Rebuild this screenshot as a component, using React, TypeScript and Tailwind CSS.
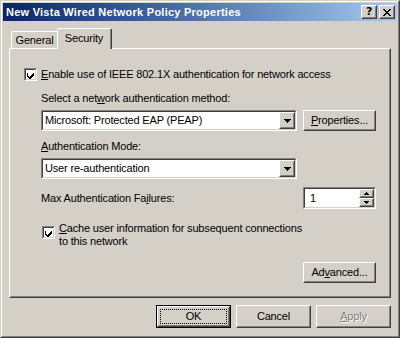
import React from "react";

const Raised = ({ children, className = "", inner = "" }: { children?: React.ReactNode; className?: string; inner?: string }) => (
  <div className={`border border-t-white border-l-white border-r-[#404040] border-b-[#404040] bg-[#d4d0c8] ${className}`}>
    <div className={`h-full w-full border border-t-[#d4d0c8] border-l-[#d4d0c8] border-r-[#808080] border-b-[#808080] flex items-center justify-center ${inner}`}>
      {children}
    </div>
  </div>
);

const Sunken = ({ children, className = "" }: { children?: React.ReactNode; className?: string }) => (
  <div className={`border border-t-[#808080] border-l-[#808080] border-r-white border-b-white ${className}`}>
    <div className="h-full w-full border border-t-[#404040] border-l-[#404040] border-r-[#d4d0c8] border-b-[#d4d0c8] bg-white flex items-center">
      {children}
    </div>
  </div>
);

const Check = () => (
  <Sunken className="w-[13px] h-[13px] shrink-0">
    <svg width="9" height="9" viewBox="0 0 9 9" shapeRendering="crispEdges">
      <path d="M1 3h1v3h1v1h1v-1h1v-1h1v-1h1v-1h1v3h-1v1h-1v1h-1v1h-2v-1h-1v-1h-1z" fill="#000" />
    </svg>
  </Sunken>
);

const Arrow = ({ up = false, w = 7 }: { up?: boolean; w?: number }) => {
  const h = Math.ceil(w / 2);
  return (
    <svg width={w} height={h} viewBox={`0 0 ${w} ${h}`} shapeRendering="crispEdges">
      <polygon points={up ? `${w / 2},0 ${w},${h} 0,${h}` : `0,0 ${w},0 ${w / 2},${h}`} fill="#000" />
    </svg>
  );
};

const Combo = ({ text }: { text: string }) => (
  <Sunken className="w-[256px] h-[21px]">
    <div className="flex-1 pl-[2px] leading-[13px] text-black">{text}</div>
    <Raised className="w-[16px] h-[17px]">
      <Arrow />
    </Raised>
  </Sunken>
);

const U = ({ children }: { children: React.ReactNode }) => (
  <span className="underline underline-offset-[1px] decoration-1">{children}</span>
);

export default function App() {
  return (
    <div className="w-[400px] h-[338px] bg-[#d4d0c8] border border-t-[#d4d0c8] border-l-[#d4d0c8] border-r-[#404040] border-b-[#404040] font-['Liberation_Sans',Arial,sans-serif] text-[11px] tracking-[-0.17px] text-black select-none">
      <div className="h-full border border-t-white border-l-white border-r-[#808080] border-b-[#808080] p-px flex flex-col">
        {/* Title bar */}
        <div className="h-[18px] bg-gradient-to-r from-[#0a246a] to-[#a6caf0] flex items-center pl-[3px] pr-[2px]">
          <div className="flex-1 text-white font-bold text-[11px] tracking-[0.25px] leading-[13px] whitespace-nowrap">
            New Vista Wired Network Policy Properties
          </div>
          <Raised className="w-[16px] h-[14px]">
            <span className="font-bold text-[11px] leading-[10px] font-['DejaVu_Sans',sans-serif]">?</span>
          </Raised>
          <Raised className="w-[16px] h-[14px] ml-[2px]">
            <svg width="8" height="7" viewBox="0 0 8 7" shapeRendering="crispEdges">
              <path d="M0 0h2v1h1v1h2v-1h1v-1h2v1h-1v1h-1v1h-1v1h1v1h1v1h1v1h-2v-1h-1v-1h-2v1h-1v1h-2v-1h1v-1h1v-1h1v-1h-1v-1h-1v-1h-1z" fill="#000" />
            </svg>
          </Raised>
        </div>

        {/* Body */}
        <div className="flex-1 flex flex-col pl-[6px]">
          {/* Tabs */}
          <div className="mt-[7px] h-[20px] flex items-end pl-[2px]">
            <div className="w-[48px] h-[17px] border-t border-l border-t-white border-l-white border-r border-r-[#404040] rounded-tl-[2px] rounded-tr-[2px]">
              <div className="h-full border-r border-r-[#808080] flex items-center justify-center leading-[13px] pt-px">General</div>
            </div>
            <div className="relative z-10 -ml-[2px] -mb-px w-[55px] h-[21px] bg-[#d4d0c8] border-t border-l border-t-white border-l-white border-r border-r-[#404040] rounded-tl-[2px] rounded-tr-[2px]">
              <div className="h-full border-r border-r-[#808080] flex items-start justify-center pt-[3px] leading-[13px]">Security</div>
            </div>
          </div>

          {/* Panel */}
          <div className="w-[382px] h-[250px] border border-t-white border-l-white border-r-[#404040] border-b-[#404040]">
            <div className="h-full border border-t-[#d4d0c8] border-l-[#d4d0c8] border-r-[#808080] border-b-[#808080] pt-[18px] pl-[30px] flex flex-col leading-[13px]">
              <div className="flex items-center h-[13px] -ml-[17px]">
                <Check />
                <span className="ml-[4px] whitespace-nowrap">
                  <U>E</U>nable use of IEEE 802.1X authentication for network access
                </span>
              </div>
              <div className="mt-[11px] h-[13px] whitespace-nowrap">
                Select a net<U>w</U>ork authentication method:
              </div>
              <div className="mt-[5px] flex">
                <Combo text="Microsoft: Protected EAP (PEAP)" />
                <Raised className="ml-[6px] w-[73px] h-[21px]">
                  <span><U>P</U>roperties...</span>
                </Raised>
              </div>
              <div className="mt-[9px] h-[13px] whitespace-nowrap">
                <U>A</U>uthentication Mode:
              </div>
              <div className="mt-[5px] flex">
                <Combo text="User re-authentication" />
              </div>
              <div className="mt-[8px] flex items-center h-[22px]">
                <div className="w-[262px] whitespace-nowrap">
                  Max Authentication Fa<U>i</U>lures:
                </div>
                <Sunken className="w-[73px] h-[22px]">
                  <div className="flex-1 pl-[5px]">1</div>
                  <div className="flex flex-col">
                    <Raised className="w-[15px] h-[9px]">
                      <Arrow up w={5} />
                    </Raised>
                    <Raised className="w-[15px] h-[9px]">
                      <Arrow w={5} />
                    </Raised>
                  </div>
                </Sunken>
              </div>
              <div className="mt-[13px] flex items-start ml-px">
                <div className="mt-[4px]">
                  <Check />
                </div>
                <div className="ml-[4px]">
                  <div className="whitespace-nowrap"><U>C</U>ache user information for subsequent connections</div>
                  <div className="whitespace-nowrap">to this network</div>
                </div>
              </div>
              <div className="mt-[14px] ml-[262px]">
                <Raised className="w-[73px] h-[21px]">
                  <span>Ad<U>v</U>anced...</span>
                </Raised>
              </div>
            </div>
          </div>

          {/* Bottom buttons */}
          <div className="mt-[7px] flex justify-end pr-[6px] gap-[5px]">
            <div className="w-[75px] h-[23px] border border-black">
              <Raised className="w-full h-full" inner="p-px">
                <div className="w-full h-full border border-dotted border-black flex items-center justify-center">OK</div>
              </Raised>
            </div>
            <Raised className="w-[75px] h-[23px]">
              <span>Cancel</span>
            </Raised>
            <Raised className="w-[75px] h-[23px]">
              <span className="text-[#808080] [text-shadow:1px_1px_0_#fff]"><U>A</U>pply</span>
            </Raised>
          </div>
        </div>
      </div>
    </div>
  );
}
